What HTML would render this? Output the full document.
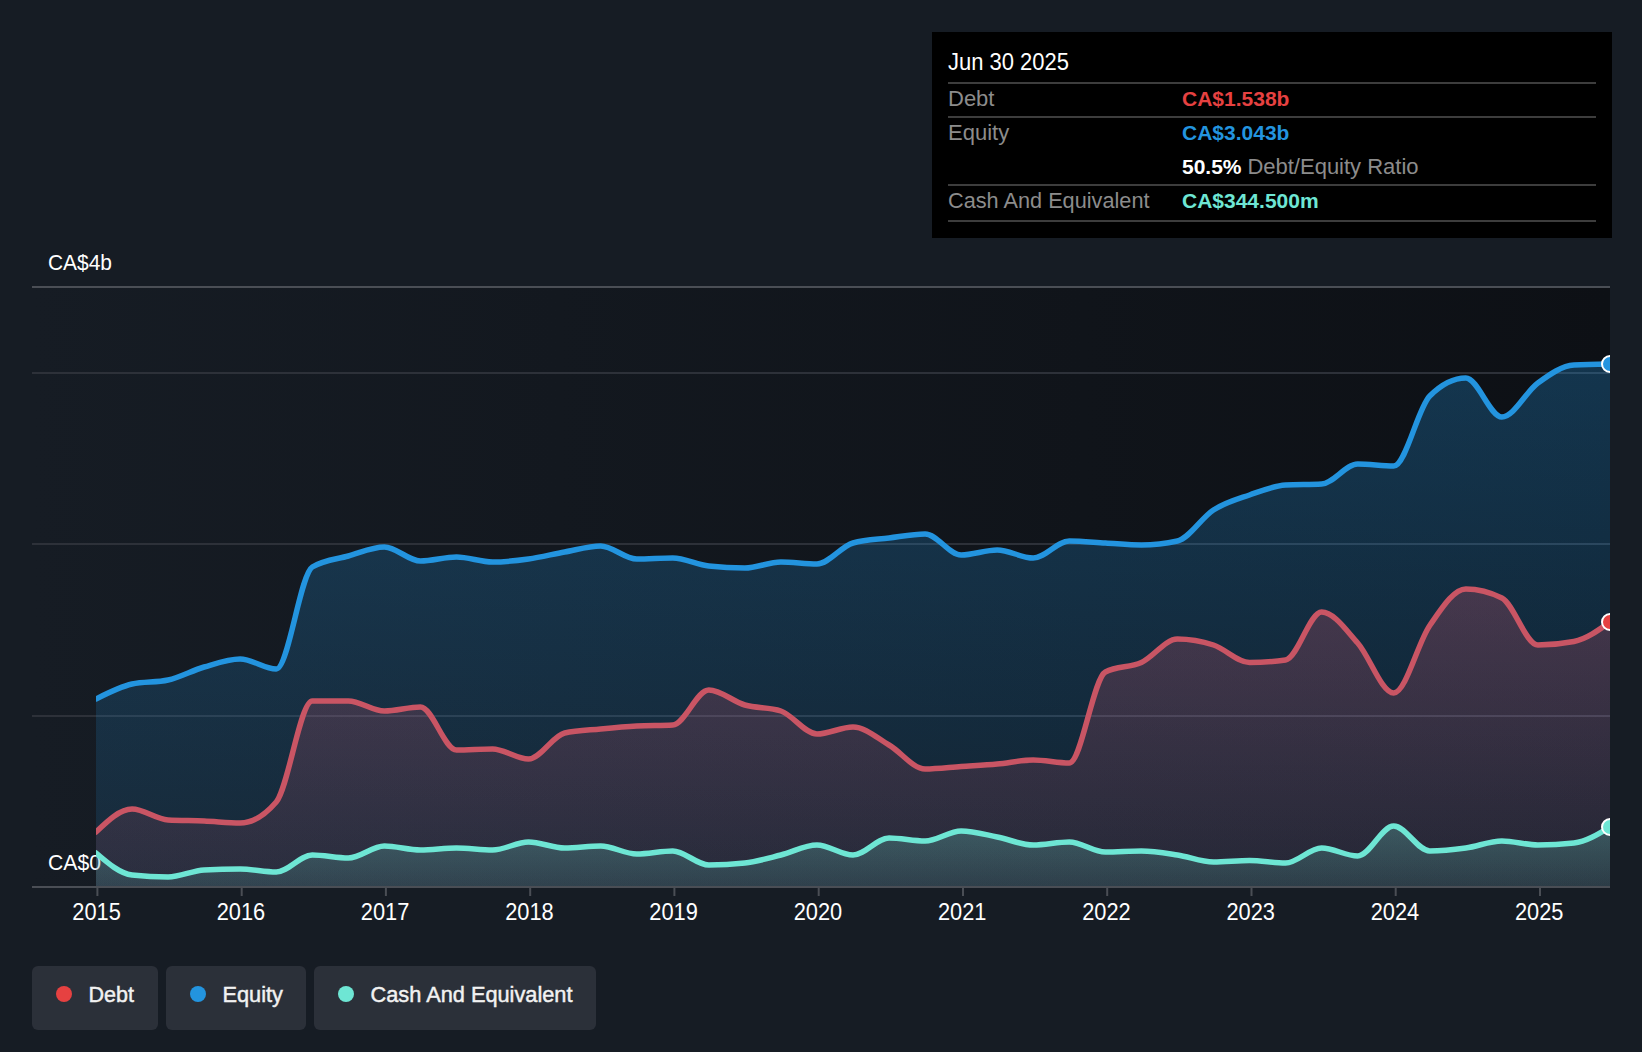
<!DOCTYPE html>
<html><head><meta charset="utf-8"><style>
html,body{margin:0;padding:0;background:#161c24;width:1642px;height:1052px;overflow:hidden}
body{position:relative}
</style></head><body>
<svg width="1642" height="1052" viewBox="0 0 1642 1052" style="position:absolute;left:0;top:0">
<defs>
<linearGradient id="plotg" x1="0" y1="0" x2="1" y2="0">
<stop offset="0" stop-color="#161c24"/><stop offset="1" stop-color="#0d1015"/>
</linearGradient>
<linearGradient id="eqg" x1="0" y1="0" x2="0" y2="1">
<stop offset="0" stop-color="#2394df" stop-opacity="0.28"/><stop offset="1" stop-color="#2394df" stop-opacity="0.12"/>
</linearGradient>
<linearGradient id="deg" x1="0" y1="0" x2="0" y2="1">
<stop offset="0" stop-color="#e85a72" stop-opacity="0.24"/><stop offset="1" stop-color="#e85a72" stop-opacity="0.09"/>
</linearGradient>
<linearGradient id="cag" x1="0" y1="0" x2="0" y2="1">
<stop offset="0" stop-color="#6ee6d4" stop-opacity="0.25"/><stop offset="1" stop-color="#6ee6d4" stop-opacity="0.12"/>
</linearGradient>
<clipPath id="clip"><rect x="96" y="0" width="1514" height="886"/></clipPath>
</defs>
<rect x="32" y="286" width="1578" height="600" fill="url(#plotg)"/>
<rect x="32" y="286" width="1578" height="2" fill="#4a4e55"/>
<rect x="32" y="372" width="1578" height="2" fill="#2d3139"/>
<rect x="32" y="543" width="1578" height="2" fill="#2d3139"/>
<rect x="32" y="715" width="1578" height="2" fill="#2d3139"/>
<text x="48" y="269.8" font-family="Liberation Sans, sans-serif" font-size="22.5" font-weight="normal" fill="#fff" text-anchor="start" textLength="64" lengthAdjust="spacingAndGlyphs">CA$4b</text>
<text x="48" y="869.8" font-family="Liberation Sans, sans-serif" font-size="22.5" font-weight="normal" fill="#fff" text-anchor="start" textLength="53" lengthAdjust="spacingAndGlyphs">CA$0</text>
<g clip-path="url(#clip)">
<path d="M96.00,699.00C108.02,692.83,120.03,686.67,132.05,684.00C144.06,681.33,156.08,682.67,168.10,680.00C180.11,677.33,192.13,670.50,204.14,667.00C216.16,663.50,228.17,659.00,240.19,659.00C252.21,659.00,264.22,669.00,276.24,669.00C288.25,669.00,300.27,574.33,312.29,567.00C324.30,559.67,336.32,559.33,348.33,556.00C360.35,552.67,372.37,547.00,384.38,547.00C396.40,547.00,408.41,561.00,420.43,561.00C432.44,561.00,444.46,557.00,456.48,557.00C468.49,557.00,480.51,562.00,492.52,562.00C504.54,562.00,516.56,560.67,528.57,559.00C540.59,557.33,552.60,554.17,564.62,552.00C576.63,549.83,588.65,546.00,600.67,546.00C612.68,546.00,624.70,559.00,636.71,559.00C648.73,559.00,660.75,558.00,672.76,558.00C684.78,558.00,696.79,564.67,708.81,566.00C720.83,567.33,732.84,568.00,744.86,568.00C756.87,568.00,768.89,562.00,780.90,562.00C792.92,562.00,804.94,564.00,816.95,564.00C828.97,564.00,840.98,546.33,853.00,543.00C865.02,539.67,877.03,539.50,889.05,538.00C901.06,536.50,913.08,534.00,925.10,534.00C937.11,534.00,949.13,555.00,961.14,555.00C973.16,555.00,985.17,550.00,997.19,550.00C1009.21,550.00,1021.22,558.00,1033.24,558.00C1045.25,558.00,1057.27,541.00,1069.29,541.00C1081.30,541.00,1093.32,542.33,1105.33,543.00C1117.35,543.67,1129.37,545.00,1141.38,545.00C1153.40,545.00,1165.41,543.67,1177.43,541.00C1189.44,538.33,1201.46,517.67,1213.48,510.00C1225.49,502.33,1237.51,499.17,1249.52,495.00C1261.54,490.83,1273.56,485.67,1285.57,485.00C1297.59,484.33,1309.60,484.67,1321.62,484.00C1333.63,483.33,1345.65,464.00,1357.67,464.00C1369.68,464.00,1381.70,466.00,1393.71,466.00C1405.73,466.00,1417.75,408.00,1429.76,396.00C1441.78,384.00,1453.79,378.00,1465.81,378.00C1477.83,378.00,1489.84,417.00,1501.86,417.00C1513.87,417.00,1525.89,391.67,1537.90,383.00C1549.92,374.33,1561.94,365.67,1573.95,365.00C1585.97,364.33,1597.98,364.17,1610.00,364.00L1610.00,886 L96.00,886 Z" fill="url(#eqg)"/>
<path d="M96.00,832.00C108.02,820.50,120.03,809.00,132.05,809.00C144.06,809.00,156.08,819.33,168.10,820.00C180.11,820.67,192.13,820.50,204.14,821.00C216.16,821.50,228.17,823.00,240.19,823.00C252.21,823.00,264.22,816.00,276.24,802.00C288.25,788.00,300.27,701.00,312.29,701.00C324.30,701.00,336.32,701.00,348.33,701.00C360.35,701.00,372.37,711.00,384.38,711.00C396.40,711.00,408.41,707.00,420.43,707.00C432.44,707.00,444.46,750.00,456.48,750.00C468.49,750.00,480.51,749.00,492.52,749.00C504.54,749.00,516.56,759.00,528.57,759.00C540.59,759.00,552.60,735.67,564.62,733.00C576.63,730.33,588.65,730.17,600.67,729.00C612.68,727.83,624.70,726.67,636.71,726.00C648.73,725.33,660.75,725.67,672.76,725.00C684.78,724.33,696.79,690.00,708.81,690.00C720.83,690.00,732.84,701.50,744.86,705.00C756.87,708.50,768.89,707.00,780.90,711.00C792.92,715.00,804.94,734.00,816.95,734.00C828.97,734.00,840.98,727.00,853.00,727.00C865.02,727.00,877.03,738.00,889.05,745.00C901.06,752.00,913.08,769.00,925.10,769.00C937.11,769.00,949.13,767.33,961.14,766.50C973.16,765.67,985.17,765.08,997.19,764.00C1009.21,762.92,1021.22,760.00,1033.24,760.00C1045.25,760.00,1057.27,763.00,1069.29,763.00C1081.30,763.00,1093.32,678.33,1105.33,672.00C1117.35,665.67,1129.37,668.00,1141.38,662.50C1153.40,657.00,1165.41,639.00,1177.43,639.00C1189.44,639.00,1201.46,641.08,1213.48,645.00C1225.49,648.92,1237.51,662.50,1249.52,662.50C1261.54,662.50,1273.56,661.67,1285.57,660.00C1297.59,658.33,1309.60,612.00,1321.62,612.00C1333.63,612.00,1345.65,629.50,1357.67,643.00C1369.68,656.50,1381.70,693.00,1393.71,693.00C1405.73,693.00,1417.75,642.83,1429.76,625.50C1441.78,608.17,1453.79,589.00,1465.81,589.00C1477.83,589.00,1489.84,592.00,1501.86,598.00C1513.87,604.00,1525.89,645.00,1537.90,645.00C1549.92,645.00,1561.94,643.83,1573.95,641.50C1585.97,639.17,1597.98,630.58,1610.00,622.00L1610.00,886 L96.00,886 Z" fill="url(#deg)"/>
<path d="M96.00,853.00C108.02,863.33,120.03,873.67,132.05,875.00C144.06,876.33,156.08,877.00,168.10,877.00C180.11,877.00,192.13,870.67,204.14,870.00C216.16,869.33,228.17,869.00,240.19,869.00C252.21,869.00,264.22,872.00,276.24,872.00C288.25,872.00,300.27,855.00,312.29,855.00C324.30,855.00,336.32,858.00,348.33,858.00C360.35,858.00,372.37,846.00,384.38,846.00C396.40,846.00,408.41,850.00,420.43,850.00C432.44,850.00,444.46,848.00,456.48,848.00C468.49,848.00,480.51,850.00,492.52,850.00C504.54,850.00,516.56,842.00,528.57,842.00C540.59,842.00,552.60,848.00,564.62,848.00C576.63,848.00,588.65,846.00,600.67,846.00C612.68,846.00,624.70,854.00,636.71,854.00C648.73,854.00,660.75,851.00,672.76,851.00C684.78,851.00,696.79,865.00,708.81,865.00C720.83,865.00,732.84,864.33,744.86,863.00C756.87,861.67,768.89,858.00,780.90,855.00C792.92,852.00,804.94,845.00,816.95,845.00C828.97,845.00,840.98,855.00,853.00,855.00C865.02,855.00,877.03,838.00,889.05,838.00C901.06,838.00,913.08,841.00,925.10,841.00C937.11,841.00,949.13,831.00,961.14,831.00C973.16,831.00,985.17,834.67,997.19,837.00C1009.21,839.33,1021.22,845.00,1033.24,845.00C1045.25,845.00,1057.27,842.00,1069.29,842.00C1081.30,842.00,1093.32,852.00,1105.33,852.00C1117.35,852.00,1129.37,851.00,1141.38,851.00C1153.40,851.00,1165.41,853.17,1177.43,855.00C1189.44,856.83,1201.46,862.00,1213.48,862.00C1225.49,862.00,1237.51,860.50,1249.52,860.50C1261.54,860.50,1273.56,863.00,1285.57,863.00C1297.59,863.00,1309.60,848.00,1321.62,848.00C1333.63,848.00,1345.65,856.00,1357.67,856.00C1369.68,856.00,1381.70,826.00,1393.71,826.00C1405.73,826.00,1417.75,851.00,1429.76,851.00C1441.78,851.00,1453.79,849.67,1465.81,848.00C1477.83,846.33,1489.84,841.00,1501.86,841.00C1513.87,841.00,1525.89,845.00,1537.90,845.00C1549.92,845.00,1561.94,844.33,1573.95,843.00C1585.97,841.67,1597.98,834.33,1610.00,827.00L1610.00,886 L96.00,886 Z" fill="url(#cag)"/>
</g>
<rect x="32" y="886" width="1578" height="2" fill="#4a4e55"/>
<rect x="96.4" y="886" width="2" height="10" fill="#4a4e55"/><text x="96.6" y="920.2" font-family="Liberation Sans, sans-serif" font-size="23" font-weight="normal" fill="#fff" text-anchor="middle" textLength="48.5" lengthAdjust="spacingAndGlyphs">2015</text><rect x="240.7" y="886" width="2" height="10" fill="#4a4e55"/><text x="240.9" y="920.2" font-family="Liberation Sans, sans-serif" font-size="23" font-weight="normal" fill="#fff" text-anchor="middle" textLength="48.5" lengthAdjust="spacingAndGlyphs">2016</text><rect x="384.9" y="886" width="2" height="10" fill="#4a4e55"/><text x="385.1" y="920.2" font-family="Liberation Sans, sans-serif" font-size="23" font-weight="normal" fill="#fff" text-anchor="middle" textLength="48.5" lengthAdjust="spacingAndGlyphs">2017</text><rect x="529.2" y="886" width="2" height="10" fill="#4a4e55"/><text x="529.4" y="920.2" font-family="Liberation Sans, sans-serif" font-size="23" font-weight="normal" fill="#fff" text-anchor="middle" textLength="48.5" lengthAdjust="spacingAndGlyphs">2018</text><rect x="673.4" y="886" width="2" height="10" fill="#4a4e55"/><text x="673.6" y="920.2" font-family="Liberation Sans, sans-serif" font-size="23" font-weight="normal" fill="#fff" text-anchor="middle" textLength="48.5" lengthAdjust="spacingAndGlyphs">2019</text><rect x="817.7" y="886" width="2" height="10" fill="#4a4e55"/><text x="817.9" y="920.2" font-family="Liberation Sans, sans-serif" font-size="23" font-weight="normal" fill="#fff" text-anchor="middle" textLength="48.5" lengthAdjust="spacingAndGlyphs">2020</text><rect x="962.0" y="886" width="2" height="10" fill="#4a4e55"/><text x="962.2" y="920.2" font-family="Liberation Sans, sans-serif" font-size="23" font-weight="normal" fill="#fff" text-anchor="middle" textLength="48.5" lengthAdjust="spacingAndGlyphs">2021</text><rect x="1106.2" y="886" width="2" height="10" fill="#4a4e55"/><text x="1106.4" y="920.2" font-family="Liberation Sans, sans-serif" font-size="23" font-weight="normal" fill="#fff" text-anchor="middle" textLength="48.5" lengthAdjust="spacingAndGlyphs">2022</text><rect x="1250.5" y="886" width="2" height="10" fill="#4a4e55"/><text x="1250.7" y="920.2" font-family="Liberation Sans, sans-serif" font-size="23" font-weight="normal" fill="#fff" text-anchor="middle" textLength="48.5" lengthAdjust="spacingAndGlyphs">2023</text><rect x="1394.7" y="886" width="2" height="10" fill="#4a4e55"/><text x="1394.9" y="920.2" font-family="Liberation Sans, sans-serif" font-size="23" font-weight="normal" fill="#fff" text-anchor="middle" textLength="48.5" lengthAdjust="spacingAndGlyphs">2024</text><rect x="1539.0" y="886" width="2" height="10" fill="#4a4e55"/><text x="1539.2" y="920.2" font-family="Liberation Sans, sans-serif" font-size="23" font-weight="normal" fill="#fff" text-anchor="middle" textLength="48.5" lengthAdjust="spacingAndGlyphs">2025</text><g clip-path="url(#clip)" fill="none" stroke-width="5.5" stroke-linejoin="round" stroke-linecap="round">
<path d="M96.00,699.00C108.02,692.83,120.03,686.67,132.05,684.00C144.06,681.33,156.08,682.67,168.10,680.00C180.11,677.33,192.13,670.50,204.14,667.00C216.16,663.50,228.17,659.00,240.19,659.00C252.21,659.00,264.22,669.00,276.24,669.00C288.25,669.00,300.27,574.33,312.29,567.00C324.30,559.67,336.32,559.33,348.33,556.00C360.35,552.67,372.37,547.00,384.38,547.00C396.40,547.00,408.41,561.00,420.43,561.00C432.44,561.00,444.46,557.00,456.48,557.00C468.49,557.00,480.51,562.00,492.52,562.00C504.54,562.00,516.56,560.67,528.57,559.00C540.59,557.33,552.60,554.17,564.62,552.00C576.63,549.83,588.65,546.00,600.67,546.00C612.68,546.00,624.70,559.00,636.71,559.00C648.73,559.00,660.75,558.00,672.76,558.00C684.78,558.00,696.79,564.67,708.81,566.00C720.83,567.33,732.84,568.00,744.86,568.00C756.87,568.00,768.89,562.00,780.90,562.00C792.92,562.00,804.94,564.00,816.95,564.00C828.97,564.00,840.98,546.33,853.00,543.00C865.02,539.67,877.03,539.50,889.05,538.00C901.06,536.50,913.08,534.00,925.10,534.00C937.11,534.00,949.13,555.00,961.14,555.00C973.16,555.00,985.17,550.00,997.19,550.00C1009.21,550.00,1021.22,558.00,1033.24,558.00C1045.25,558.00,1057.27,541.00,1069.29,541.00C1081.30,541.00,1093.32,542.33,1105.33,543.00C1117.35,543.67,1129.37,545.00,1141.38,545.00C1153.40,545.00,1165.41,543.67,1177.43,541.00C1189.44,538.33,1201.46,517.67,1213.48,510.00C1225.49,502.33,1237.51,499.17,1249.52,495.00C1261.54,490.83,1273.56,485.67,1285.57,485.00C1297.59,484.33,1309.60,484.67,1321.62,484.00C1333.63,483.33,1345.65,464.00,1357.67,464.00C1369.68,464.00,1381.70,466.00,1393.71,466.00C1405.73,466.00,1417.75,408.00,1429.76,396.00C1441.78,384.00,1453.79,378.00,1465.81,378.00C1477.83,378.00,1489.84,417.00,1501.86,417.00C1513.87,417.00,1525.89,391.67,1537.90,383.00C1549.92,374.33,1561.94,365.67,1573.95,365.00C1585.97,364.33,1597.98,364.17,1610.00,364.00" stroke="#2394df"/>
<path d="M96.00,832.00C108.02,820.50,120.03,809.00,132.05,809.00C144.06,809.00,156.08,819.33,168.10,820.00C180.11,820.67,192.13,820.50,204.14,821.00C216.16,821.50,228.17,823.00,240.19,823.00C252.21,823.00,264.22,816.00,276.24,802.00C288.25,788.00,300.27,701.00,312.29,701.00C324.30,701.00,336.32,701.00,348.33,701.00C360.35,701.00,372.37,711.00,384.38,711.00C396.40,711.00,408.41,707.00,420.43,707.00C432.44,707.00,444.46,750.00,456.48,750.00C468.49,750.00,480.51,749.00,492.52,749.00C504.54,749.00,516.56,759.00,528.57,759.00C540.59,759.00,552.60,735.67,564.62,733.00C576.63,730.33,588.65,730.17,600.67,729.00C612.68,727.83,624.70,726.67,636.71,726.00C648.73,725.33,660.75,725.67,672.76,725.00C684.78,724.33,696.79,690.00,708.81,690.00C720.83,690.00,732.84,701.50,744.86,705.00C756.87,708.50,768.89,707.00,780.90,711.00C792.92,715.00,804.94,734.00,816.95,734.00C828.97,734.00,840.98,727.00,853.00,727.00C865.02,727.00,877.03,738.00,889.05,745.00C901.06,752.00,913.08,769.00,925.10,769.00C937.11,769.00,949.13,767.33,961.14,766.50C973.16,765.67,985.17,765.08,997.19,764.00C1009.21,762.92,1021.22,760.00,1033.24,760.00C1045.25,760.00,1057.27,763.00,1069.29,763.00C1081.30,763.00,1093.32,678.33,1105.33,672.00C1117.35,665.67,1129.37,668.00,1141.38,662.50C1153.40,657.00,1165.41,639.00,1177.43,639.00C1189.44,639.00,1201.46,641.08,1213.48,645.00C1225.49,648.92,1237.51,662.50,1249.52,662.50C1261.54,662.50,1273.56,661.67,1285.57,660.00C1297.59,658.33,1309.60,612.00,1321.62,612.00C1333.63,612.00,1345.65,629.50,1357.67,643.00C1369.68,656.50,1381.70,693.00,1393.71,693.00C1405.73,693.00,1417.75,642.83,1429.76,625.50C1441.78,608.17,1453.79,589.00,1465.81,589.00C1477.83,589.00,1489.84,592.00,1501.86,598.00C1513.87,604.00,1525.89,645.00,1537.90,645.00C1549.92,645.00,1561.94,643.83,1573.95,641.50C1585.97,639.17,1597.98,630.58,1610.00,622.00" stroke="#c95564"/>
<path d="M96.00,853.00C108.02,863.33,120.03,873.67,132.05,875.00C144.06,876.33,156.08,877.00,168.10,877.00C180.11,877.00,192.13,870.67,204.14,870.00C216.16,869.33,228.17,869.00,240.19,869.00C252.21,869.00,264.22,872.00,276.24,872.00C288.25,872.00,300.27,855.00,312.29,855.00C324.30,855.00,336.32,858.00,348.33,858.00C360.35,858.00,372.37,846.00,384.38,846.00C396.40,846.00,408.41,850.00,420.43,850.00C432.44,850.00,444.46,848.00,456.48,848.00C468.49,848.00,480.51,850.00,492.52,850.00C504.54,850.00,516.56,842.00,528.57,842.00C540.59,842.00,552.60,848.00,564.62,848.00C576.63,848.00,588.65,846.00,600.67,846.00C612.68,846.00,624.70,854.00,636.71,854.00C648.73,854.00,660.75,851.00,672.76,851.00C684.78,851.00,696.79,865.00,708.81,865.00C720.83,865.00,732.84,864.33,744.86,863.00C756.87,861.67,768.89,858.00,780.90,855.00C792.92,852.00,804.94,845.00,816.95,845.00C828.97,845.00,840.98,855.00,853.00,855.00C865.02,855.00,877.03,838.00,889.05,838.00C901.06,838.00,913.08,841.00,925.10,841.00C937.11,841.00,949.13,831.00,961.14,831.00C973.16,831.00,985.17,834.67,997.19,837.00C1009.21,839.33,1021.22,845.00,1033.24,845.00C1045.25,845.00,1057.27,842.00,1069.29,842.00C1081.30,842.00,1093.32,852.00,1105.33,852.00C1117.35,852.00,1129.37,851.00,1141.38,851.00C1153.40,851.00,1165.41,853.17,1177.43,855.00C1189.44,856.83,1201.46,862.00,1213.48,862.00C1225.49,862.00,1237.51,860.50,1249.52,860.50C1261.54,860.50,1273.56,863.00,1285.57,863.00C1297.59,863.00,1309.60,848.00,1321.62,848.00C1333.63,848.00,1345.65,856.00,1357.67,856.00C1369.68,856.00,1381.70,826.00,1393.71,826.00C1405.73,826.00,1417.75,851.00,1429.76,851.00C1441.78,851.00,1453.79,849.67,1465.81,848.00C1477.83,846.33,1489.84,841.00,1501.86,841.00C1513.87,841.00,1525.89,845.00,1537.90,845.00C1549.92,845.00,1561.94,844.33,1573.95,843.00C1585.97,841.67,1597.98,834.33,1610.00,827.00" stroke="#6ee6d4"/>
<circle cx="1610" cy="364" r="8" fill="#2394df" stroke="#fff" stroke-width="2"/>
<circle cx="1610" cy="622" r="8" fill="#e64141" stroke="#fff" stroke-width="2"/>
<circle cx="1610" cy="827" r="8" fill="#6ee6d4" stroke="#fff" stroke-width="2"/>
</g>
<rect x="932" y="32" width="680" height="206" fill="#000"/>
<rect x="948" y="82" width="648" height="2" fill="#3d3d3d"/>
<rect x="948" y="116" width="648" height="2" fill="#3d3d3d"/>
<rect x="948" y="184" width="648" height="2" fill="#3d3d3d"/>
<rect x="948" y="220" width="648" height="2" fill="#3d3d3d"/>
<text x="948" y="70" font-family="Liberation Sans, sans-serif" font-size="23" font-weight="normal" fill="#fff" text-anchor="start" textLength="121" lengthAdjust="spacingAndGlyphs">Jun 30 2025</text><text x="948" y="105.5" font-family="Liberation Sans, sans-serif" font-size="22" font-weight="normal" fill="#8c8c8c" text-anchor="start" >Debt</text><text x="948" y="139.5" font-family="Liberation Sans, sans-serif" font-size="22" font-weight="normal" fill="#8c8c8c" text-anchor="start" >Equity</text><text x="948" y="207.5" font-family="Liberation Sans, sans-serif" font-size="22" font-weight="normal" fill="#8c8c8c" text-anchor="start" textLength="201.5" lengthAdjust="spacingAndGlyphs">Cash And Equivalent</text><text x="1182" y="105.5" font-family="Liberation Sans, sans-serif" font-size="21" font-weight="bold" fill="#e64141" text-anchor="start" >CA$1.538b</text><text x="1182" y="139.5" font-family="Liberation Sans, sans-serif" font-size="21" font-weight="bold" fill="#2394df" text-anchor="start" >CA$3.043b</text><text x="1182" y="173.5" font-family="Liberation Sans, sans-serif" font-size="22"><tspan fill="#fff" font-weight="bold" font-size="21">50.5% </tspan><tspan fill="#8c8c8c">Debt/Equity Ratio</tspan></text><text x="1182" y="207.5" font-family="Liberation Sans, sans-serif" font-size="21" font-weight="bold" fill="#6ee6d4" text-anchor="start" >CA$344.500m</text><rect x="32" y="966" width="126" height="64" rx="6" fill="#2b3039"/><circle cx="64" cy="994" r="8" fill="#e64141"/><text x="88.5" y="1002" font-family="Liberation Sans, sans-serif" font-size="22" font-weight="normal" fill="#f2f2f2" text-anchor="start" style="color:#f2f2f2" textLength="45.5" lengthAdjust="spacingAndGlyphs" stroke-width="0.45" stroke="currentColor">Debt</text><rect x="166" y="966" width="140" height="64" rx="6" fill="#2b3039"/><circle cx="198" cy="994" r="8" fill="#2394df"/><text x="222.5" y="1002" font-family="Liberation Sans, sans-serif" font-size="22" font-weight="normal" fill="#f2f2f2" text-anchor="start" style="color:#f2f2f2" textLength="60.5" lengthAdjust="spacingAndGlyphs" stroke-width="0.45" stroke="currentColor">Equity</text><rect x="314" y="966" width="282" height="64" rx="6" fill="#2b3039"/><circle cx="346" cy="994" r="8" fill="#6ee6d4"/><text x="370.5" y="1002" font-family="Liberation Sans, sans-serif" font-size="22" font-weight="normal" fill="#f2f2f2" text-anchor="start" style="color:#f2f2f2" textLength="202" lengthAdjust="spacingAndGlyphs" stroke-width="0.45" stroke="currentColor">Cash And Equivalent</text></svg>
</body></html>
